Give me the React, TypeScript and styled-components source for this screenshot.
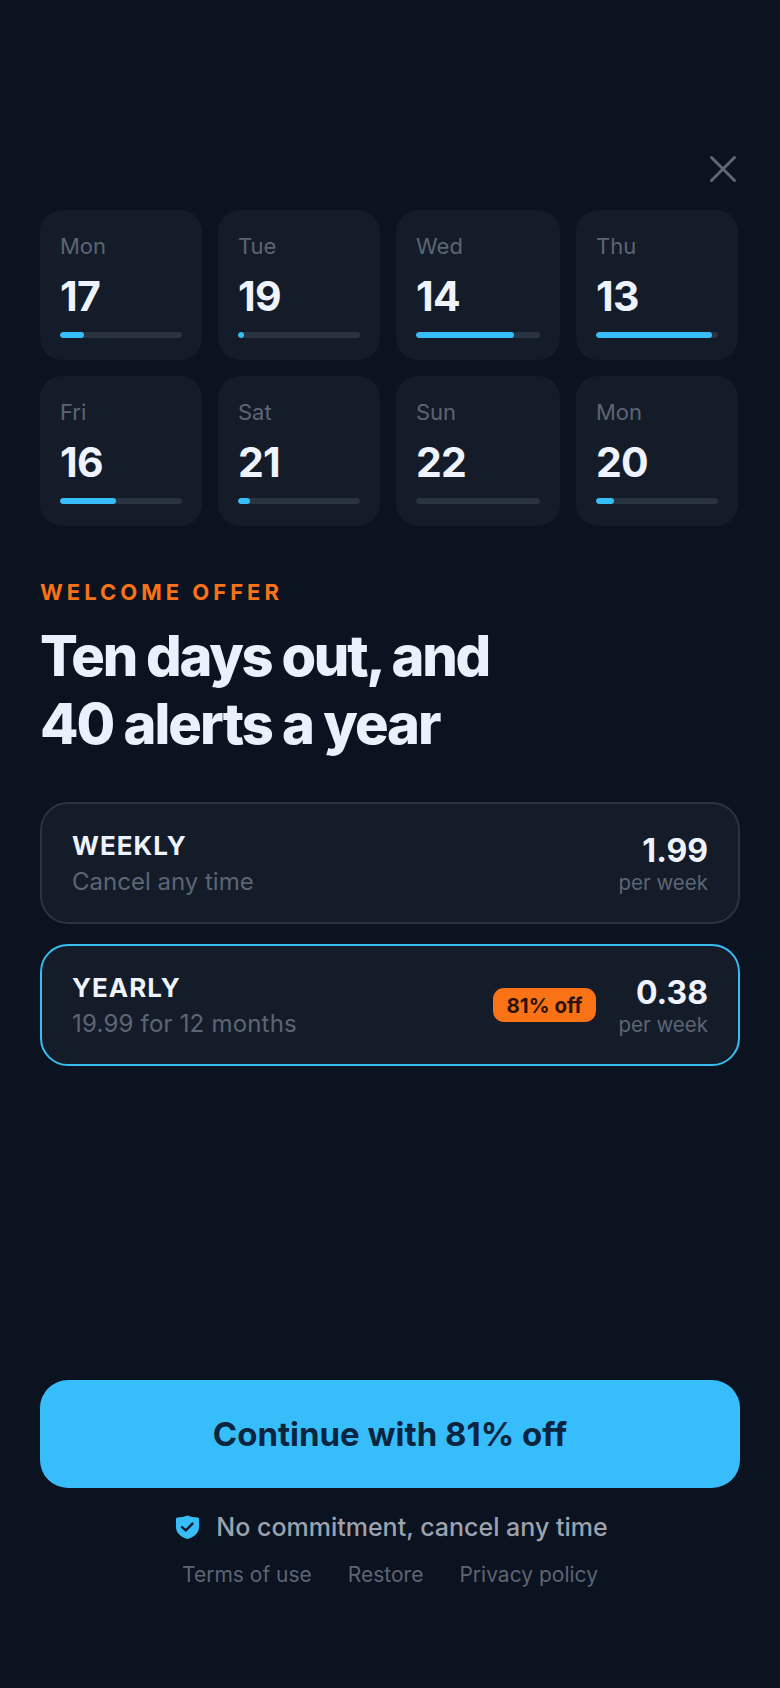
import React from "react";
import styled, { createGlobalStyle } from "styled-components";

const Global = createGlobalStyle`
  html, body { margin: 0; padding: 0; background: #0b1220; }
  * { box-sizing: border-box; }
`;

const Page = styled.div`
  width: 780px;
  height: 1688px;
  padding: 154px 40px 0;
  display: flex;
  flex-direction: column;
  background: #0b1220;
  font-family: Inter, "Liberation Sans", sans-serif;
  color: #eef3fd;
`;

const CloseRow = styled.div`
  display: flex;
  justify-content: flex-end;
  height: 56px;
  padding-right: 2px;
`;

const CloseButton = styled.svg`
  width: 30px;
  height: 30px;
  display: block;
`;

const DayGrid = styled.div`
  display: grid;
  grid-template-columns: 162px 162px 164px 162px;
  grid-auto-rows: 150px;
  gap: 16px;
`;

const DayCard = styled.div`
  background: #141c2a;
  border-radius: 22px;
  padding: 23px 20px 0;
  display: flex;
  flex-direction: column;
`;

const DayName = styled.div`
  font-size: 22px;
  line-height: 26px;
  color: #5c6573;
`;

const DayNumber = styled.div`
  font-size: 41px;
  line-height: 48px;
  font-weight: 700;
  letter-spacing: -0.8px;
  margin-top: 13px;
`;

const Track = styled.div`
  margin-top: 12px;
  height: 6px;
  border-radius: 3px;
  background: #2a3340;
  overflow: hidden;
`;

const Fill = styled.div`
  height: 100%;
  border-radius: 3px;
  background: #38bdfb;
`;

const Eyebrow = styled.div`
  margin-top: 53px;
  font-size: 22px;
  line-height: 26px;
  font-weight: 700;
  letter-spacing: 4px;
  color: #f97316;
`;

const Headline = styled.h1`
  margin: 17px 0 0;
  font-size: 56px;
  line-height: 68px;
  font-weight: 800;
  letter-spacing: -2.24px;
  color: #eaf0fc;
`;

const HeadlineLine = styled.span<{ $tracking?: number }>`
  display: block;
  letter-spacing: ${(p) => p.$tracking ?? -2.24}px;
`;

const Plans = styled.div`
  margin-top: 44px;
  display: flex;
  flex-direction: column;
  gap: 20px;
`;

const Plan = styled.div<{ $selected?: boolean }>`
  height: 122px;
  border-radius: 28px;
  border: 2px solid ${(p) => (p.$selected ? "#38bdf0" : "#2a3340")};
  background: #141c2a;
  padding: 0 30px;
  display: flex;
  align-items: center;
`;

const PlanInfo = styled.div`
  flex: 1;
  display: flex;
  flex-direction: column;
  padding-top: 1px;
`;

const PlanName = styled.div`
  font-size: 26px;
  line-height: 30px;
  font-weight: 700;
  letter-spacing: 1px;
`;

const PlanNote = styled.div<{ $tracking?: number }>`
  font-size: 24px;
  line-height: 30px;
  margin-top: 6px;
  letter-spacing: ${(p) => p.$tracking ?? 0}px;
  color: #5c6573;
`;

const Badge = styled.div`
  height: 34px;
  padding: 0 14px;
  margin-right: 22px;
  border-radius: 11px;
  background: #f97316;
  color: #2a1208;
  font-size: 20.5px;
  font-weight: 700;
  display: flex;
  align-items: center;
`;

const Price = styled.div`
  display: flex;
  flex-direction: column;
  align-items: flex-end;
`;

const PriceValue = styled.div`
  font-size: 32px;
  line-height: 38px;
  font-weight: 700;
  margin-top: 1px;
`;

const PriceUnit = styled.div`
  font-size: 20.5px;
  line-height: 26px;
  color: #5c6573;
`;

const Cta = styled.button`
  margin-top: auto;
  height: 108px;
  width: 100%;
  border: none;
  border-radius: 28px;
  background: #38bdfb;
  color: #0a2540;
  font-family: inherit;
  font-size: 33px;
  font-weight: 700;
`;

const Footer = styled.div`
  padding-bottom: 99px;
`;

const Assurance = styled.div`
  margin-top: 24px;
  padding-left: 4px;
  display: flex;
  align-items: center;
  justify-content: center;
  gap: 17px;
  font-size: 25px;
  line-height: 30px;
  font-weight: 500;
  color: #9ba3af;
`;

const Links = styled.div`
  margin-top: 19px;
  display: flex;
  justify-content: center;
  gap: 36px;
  font-size: 21px;
  line-height: 28px;
  color: #5c6573;
`;

const days = [
  ["Mon", 17, 20],
  ["Tue", 19, 5],
  ["Wed", 14, 79],
  ["Thu", 13, 95],
  ["Fri", 16, 46],
  ["Sat", 21, 10],
  ["Sun", 22, 0],
  ["Mon", 20, 15],
] as const;

export default function App() {
  return (
    <Page>
      <Global />
      <CloseRow>
        <CloseButton viewBox="0 0 30 30" fill="none" stroke="#5f6874" strokeWidth="3" strokeLinecap="round">
          <path d="M3.5 3.5 L26.5 26.5 M26.5 3.5 L3.5 26.5" />
        </CloseButton>
      </CloseRow>
      <DayGrid>
        {days.map(([name, num, pct], i) => (
          <DayCard key={i}>
            <DayName>{name}</DayName>
            <DayNumber>{num}</DayNumber>
            <Track>
              <Fill style={{ width: `${pct}%` }} />
            </Track>
          </DayCard>
        ))}
      </DayGrid>
      <Eyebrow>WELCOME OFFER</Eyebrow>
      <Headline>
        <HeadlineLine>Ten days out, and</HeadlineLine>
        <HeadlineLine $tracking={-2}>40 alerts a year</HeadlineLine>
      </Headline>
      <Plans>
        <Plan>
          <PlanInfo>
            <PlanName>WEEKLY</PlanName>
            <PlanNote>Cancel any time</PlanNote>
          </PlanInfo>
          <Price>
            <PriceValue>1.99</PriceValue>
            <PriceUnit>per week</PriceUnit>
          </Price>
        </Plan>
        <Plan $selected>
          <PlanInfo>
            <PlanName>YEARLY</PlanName>
            <PlanNote $tracking={0.2}>19.99 for 12 months</PlanNote>
          </PlanInfo>
          <Badge>81% off</Badge>
          <Price>
            <PriceValue>0.38</PriceValue>
            <PriceUnit>per week</PriceUnit>
          </Price>
        </Plan>
      </Plans>
      <Cta>Continue with 81% off</Cta>
      <Footer>
        <Assurance>
          <svg width="23" height="24" viewBox="0 0 23 24">
            <path d="M11.5 0.5 C14.5 1.8 18 2.4 21.5 2.4 Q23 2.4 23 4 V12 C23 18 18 22 11.5 24 C5 22 0 18 0 12 V4 Q0 2.4 1.5 2.4 C5 2.4 8.5 1.8 11.5 0.5 Z" fill="#38bdfb" />
            <path d="M6 12.2 L9.8 15.4 L16.5 8.6" fill="none" stroke="#0f1b2d" strokeWidth="2.4" strokeLinecap="round" strokeLinejoin="round" />
          </svg>
          No commitment, cancel any time
        </Assurance>
        <Links>
          <span>Terms of use</span>
          <span>Restore</span>
          <span>Privacy policy</span>
        </Links>
      </Footer>
    </Page>
  );
}
